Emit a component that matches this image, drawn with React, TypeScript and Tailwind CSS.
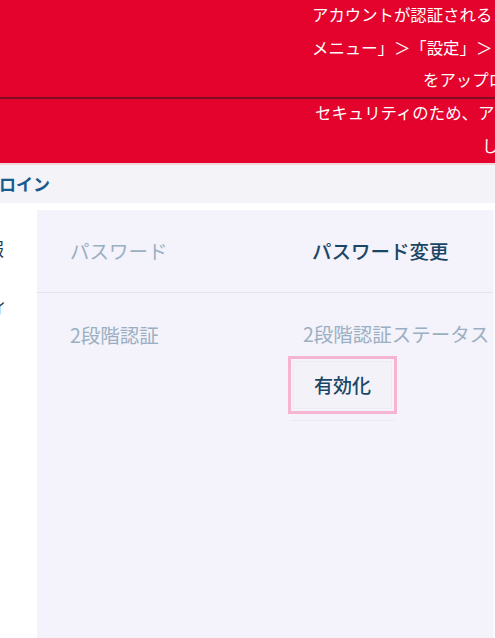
import React from "react";

const font = { fontFamily: '"Noto Sans CJK JP", "Noto Sans", sans-serif' };

export default function App() {
  return (
    <div className="w-[495px] h-[638px] overflow-hidden bg-white" style={font}>
      {/* banner 1 */}
      <div className="h-[97px] bg-[#e3032c] text-white text-[16.4px] leading-[32.5px] overflow-hidden whitespace-nowrap">
        <div className="-mt-[2px]">
          <div className="pl-[312px]">アカウントが認証されるまで</div>
          <div className="pl-[312px]">メニュー」＞「設定」＞「本人確認」</div>
          <div className="pl-[423px]">をアップロードしてください</div>
        </div>
      </div>
      <div className="h-[2px] bg-[#7a0f1f]" />
      {/* banner 2 */}
      <div className="h-[64px] bg-[#e3032c] text-white text-[16.4px] leading-[32.5px] overflow-hidden whitespace-nowrap">
        <div className="-mt-[3px]">
          <div className="pl-[315px]">セキュリティのため、アカウントを</div>
          <div className="pl-[482px]">してください</div>
        </div>
      </div>
      <div className="h-[2px] bg-[#f2d6da]" />
      {/* gray band */}
      <div className="h-[38px] bg-[#f3f3f8] flex items-center whitespace-nowrap overflow-hidden">
        <span className="-ml-[1px] text-[17px] font-bold text-[#175a8c]">ロイン</span>
      </div>
      <div className="h-[7px] bg-white" />
      <div className="flex h-[428px]">
        <div className="w-[37px] shrink-0 bg-white relative overflow-hidden text-[18px] text-[#1f3b55]">
          <div className="absolute left-[-14px] top-[25px]">報</div>
          <div className="absolute left-[-10px] top-[82px]">ィ</div>
        </div>
        <div className="w-[456px] shrink-0 bg-[#f4f2fa] overflow-hidden">
          <div className="flex h-[84px] items-center border-b border-[#e4e4ee] whitespace-nowrap -mt-[1px]">
            <div className="w-[275px] shrink-0 pl-[33px] text-[19.5px] text-[#9ab0c2]">パスワード</div>
            <div className="text-[19.5px] font-medium text-[#1a4666]">パスワード変更</div>
          </div>
          <div className="flex pt-[27px] whitespace-nowrap">
            <div className="w-[266px] shrink-0 pl-[33px] text-[19.5px] text-[#9ab0c2]">2段階認証</div>
            <div className="flex flex-col">
              <div className="text-[19.5px] text-[#9ab0c2] leading-[28px]">2段階認証ステータス：無効</div>
              <div className="mt-[8px] ml-[-15px] w-[109px] h-[58px] border-[3px] border-[#f5b5d0] flex items-center justify-center">
                <div className="w-[99px] h-[48px] bg-[#f3f2f9] border border-[#ececf2] flex items-center justify-center text-[19px] font-medium text-[#1a4666]">
                  有効化
                </div>
              </div>
              <div className="ml-[-12px] mt-[6px] w-[104px] h-[1px] bg-[#ebe9f3]" />
            </div>
          </div>
        </div>
        <div className="w-[2px] bg-[#fafafd]" />
      </div>
    </div>
  );
}
